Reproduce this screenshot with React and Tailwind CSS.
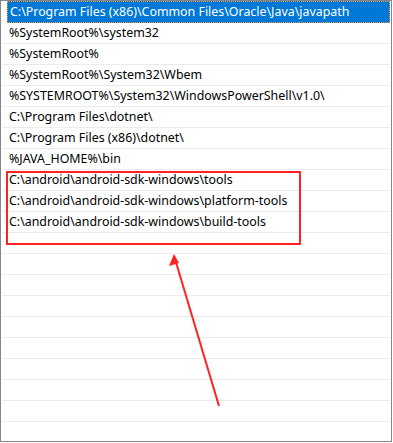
import React from 'react';

const paths = [
    'C:\\Program Files (x86)\\Common Files\\Oracle\\Java\\javapath',
    '%SystemRoot%\\system32',
    '%SystemRoot%',
    '%SystemRoot%\\System32\\Wbem',
    '%SYSTEMROOT%\\System32\\WindowsPowerShell\\v1.0\\',
    'C:\\Program Files\\dotnet\\',
    'C:\\Program Files (x86)\\dotnet\\',
    '%JAVA_HOME%\\bin',
    'C:\\android\\android-sdk-windows\\tools',
    'C:\\android\\android-sdk-windows\\platform-tools',
    'C:\\android\\android-sdk-windows\\build-tools',
];

const TOTAL_ROWS = 21;

const App = () => {
    const rows = Array.from({ length: TOTAL_ROWS }, (_, i) => paths[i] || '');

    return (
        <div className="relative w-[392px] h-[442px] bg-white border border-[#82878f] overflow-hidden font-['Noto_Sans','Liberation_Sans',sans-serif] text-[12.4px] text-black">
            <div className="flex flex-col">
                {rows.map((p, i) => (
                    i === 0 ? (
                        <div key={i} className="h-[22px] ml-[6px] mr-px flex items-center pl-[2px] bg-[#0078d7] text-white border border-dotted border-[#f59a3c]">
                            <span className="leading-none whitespace-pre">{p}</span>
                        </div>
                    ) : (
                        <div key={i} className="h-[21px] ml-px mr-px flex items-center pl-[7px] border-b border-[#ebebeb] box-border">
                            <span className="leading-none whitespace-pre">{p}</span>
                        </div>
                    )
                ))}
            </div>

            {/* red annotation box */}
            <div className="absolute left-[5px] top-[170px] w-[295px] h-[74px] border-2 border-[#ff2222]" />

            {/* arrow */}
            <svg className="absolute left-0 top-0 pointer-events-none" width="392" height="442" viewBox="0 0 392 442">
                <line x1="218" y1="405" x2="174" y2="258" stroke="#ff2222" strokeWidth="2" />
                <polygon points="173,253 168,265 178,262" fill="#ff2222" />
            </svg>
        </div>
    );
};

export default App;
